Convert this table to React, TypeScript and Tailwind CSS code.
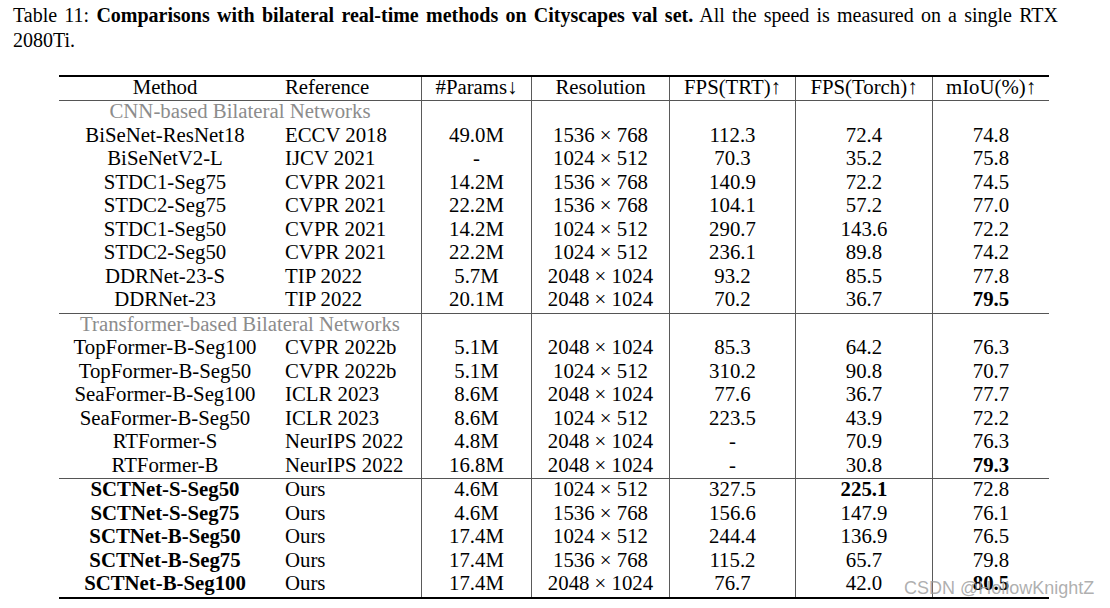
const cols = 'grid grid-cols-[212px_150px_110px_138px_126px_137px_117px]';

type Row = {
  m: string;
  r: string;
  p: string;
  res: string;
  trt: string;
  torch: string;
  miou: string;
  bm?: boolean;
  bTorch?: boolean;
  bMiou?: boolean;
};

const cnn: Row[] = [
  { m: 'BiSeNet-ResNet18', r: 'ECCV 2018', p: '49.0M', res: '1536 × 768', trt: '112.3', torch: '72.4', miou: '74.8' },
  { m: 'BiSeNetV2-L', r: 'IJCV 2021', p: '-', res: '1024 × 512', trt: '70.3', torch: '35.2', miou: '75.8' },
  { m: 'STDC1-Seg75', r: 'CVPR 2021', p: '14.2M', res: '1536 × 768', trt: '140.9', torch: '72.2', miou: '74.5' },
  { m: 'STDC2-Seg75', r: 'CVPR 2021', p: '22.2M', res: '1536 × 768', trt: '104.1', torch: '57.2', miou: '77.0' },
  { m: 'STDC1-Seg50', r: 'CVPR 2021', p: '14.2M', res: '1024 × 512', trt: '290.7', torch: '143.6', miou: '72.2' },
  { m: 'STDC2-Seg50', r: 'CVPR 2021', p: '22.2M', res: '1024 × 512', trt: '236.1', torch: '89.8', miou: '74.2' },
  { m: 'DDRNet-23-S', r: 'TIP 2022', p: '5.7M', res: '2048 × 1024', trt: '93.2', torch: '85.5', miou: '77.8' },
  { m: 'DDRNet-23', r: 'TIP 2022', p: '20.1M', res: '2048 × 1024', trt: '70.2', torch: '36.7', miou: '79.5', bMiou: true },
];

const trans: Row[] = [
  { m: 'TopFormer-B-Seg100', r: 'CVPR 2022b', p: '5.1M', res: '2048 × 1024', trt: '85.3', torch: '64.2', miou: '76.3' },
  { m: 'TopFormer-B-Seg50', r: 'CVPR 2022b', p: '5.1M', res: '1024 × 512', trt: '310.2', torch: '90.8', miou: '70.7' },
  { m: 'SeaFormer-B-Seg100', r: 'ICLR 2023', p: '8.6M', res: '2048 × 1024', trt: '77.6', torch: '36.7', miou: '77.7' },
  { m: 'SeaFormer-B-Seg50', r: 'ICLR 2023', p: '8.6M', res: '1024 × 512', trt: '223.5', torch: '43.9', miou: '72.2' },
  { m: 'RTFormer-S', r: 'NeurIPS 2022', p: '4.8M', res: '2048 × 1024', trt: '-', torch: '70.9', miou: '76.3' },
  { m: 'RTFormer-B', r: 'NeurIPS 2022', p: '16.8M', res: '2048 × 1024', trt: '-', torch: '30.8', miou: '79.3', bMiou: true },
];

const ours: Row[] = [
  { m: 'SCTNet-S-Seg50', r: 'Ours', p: '4.6M', res: '1024 × 512', trt: '327.5', torch: '225.1', miou: '72.8', bm: true, bTorch: true },
  { m: 'SCTNet-S-Seg75', r: 'Ours', p: '4.6M', res: '1536 × 768', trt: '156.6', torch: '147.9', miou: '76.1', bm: true },
  { m: 'SCTNet-B-Seg50', r: 'Ours', p: '17.4M', res: '1024 × 512', trt: '244.4', torch: '136.9', miou: '76.5', bm: true },
  { m: 'SCTNet-B-Seg75', r: 'Ours', p: '17.4M', res: '1536 × 768', trt: '115.2', torch: '65.7', miou: '79.8', bm: true },
  { m: 'SCTNet-B-Seg100', r: 'Ours', p: '17.4M', res: '2048 × 1024', trt: '76.7', torch: '42.0', miou: '80.5', bm: true, bMiou: true },
];

const cell = 'text-center border-l border-[#5a5a5a]';

function DataRow({ row }: { row: Row }) {
  return (
    <div className={`${cols} h-[23.5px] leading-[19.5px]`}>
      <div className={`text-center ${row.bm ? 'font-bold' : ''}`}>{row.m}</div>
      <div className="pl-[14px]">{row.r}</div>
      <div className={cell}>{row.p}</div>
      <div className={cell}>{row.res}</div>
      <div className={cell}>{row.trt}</div>
      <div className={`${cell} ${row.bTorch ? 'font-bold' : ''}`}>{row.torch}</div>
      <div className={`${cell} ${row.bMiou ? 'font-bold' : ''}`}>{row.miou}</div>
    </div>
  );
}

function GroupRow({ label }: { label: string }) {
  return (
    <div className={`${cols} h-[23.5px] leading-[19.5px]`}>
      <div className="col-span-2 text-center text-[#8c8c8c]">{label}</div>
      <div className={cell} />
      <div className={cell} />
      <div className={cell} />
      <div className={cell} />
      <div className={cell} />
    </div>
  );
}

export default function App() {
  return (
    <div className="w-[1110px] h-[608px] bg-white text-black font-['Liberation_Serif','Times_New_Roman',serif] relative overflow-hidden">
      {/* caption */}
      <div className="pl-[13px] pt-[3px] w-[1058px] text-[20px] leading-[25px]">
        <span className="block [text-align-last:justify] whitespace-nowrap">
          Table 11: <b>Comparisons with bilateral real-time methods on Cityscapes val set.</b> All the speed is measured on a single RTX
        </span>
        <span className="block">2080Ti.</span>
      </div>

      {/* table */}
      <div className="ml-[59px] mt-[22px] w-[990px] text-[20.8px]">
        <div className="h-[2px] bg-black" />
        <div className={`${cols} h-[23px] leading-[19.5px]`}>
          <div className="text-center">Method</div>
          <div className="pl-[14px]">Reference</div>
          <div className={cell}>#Params↓</div>
          <div className={cell}>Resolution</div>
          <div className={cell}>FPS(TRT)↑</div>
          <div className={cell}>FPS(Torch)↑</div>
          <div className={cell}>mIoU(%)↑</div>
        </div>
        <div className="h-px bg-[#555]" />
        <GroupRow label="CNN-based Bilateral Networks" />
        {cnn.map((r) => (
          <DataRow key={r.m} row={r} />
        ))}
        <div className="h-px bg-[#555]" />
        <GroupRow label="Transformer-based Bilateral Networks" />
        {trans.map((r) => (
          <DataRow key={r.m} row={r} />
        ))}
        <div className="h-px bg-[#555]" />
        {ours.map((r) => (
          <DataRow key={r.m} row={r} />
        ))}
        <div className="h-[2px] bg-black" />
      </div>

      {/* watermark */}
      <div className="absolute left-[904px] top-[578px] font-['Liberation_Sans',Arial,sans-serif] text-[18px] leading-[20px] text-[#9a9a9a]/80">
        CSDN @HollowKnightZ
      </div>
    </div>
  );
}
